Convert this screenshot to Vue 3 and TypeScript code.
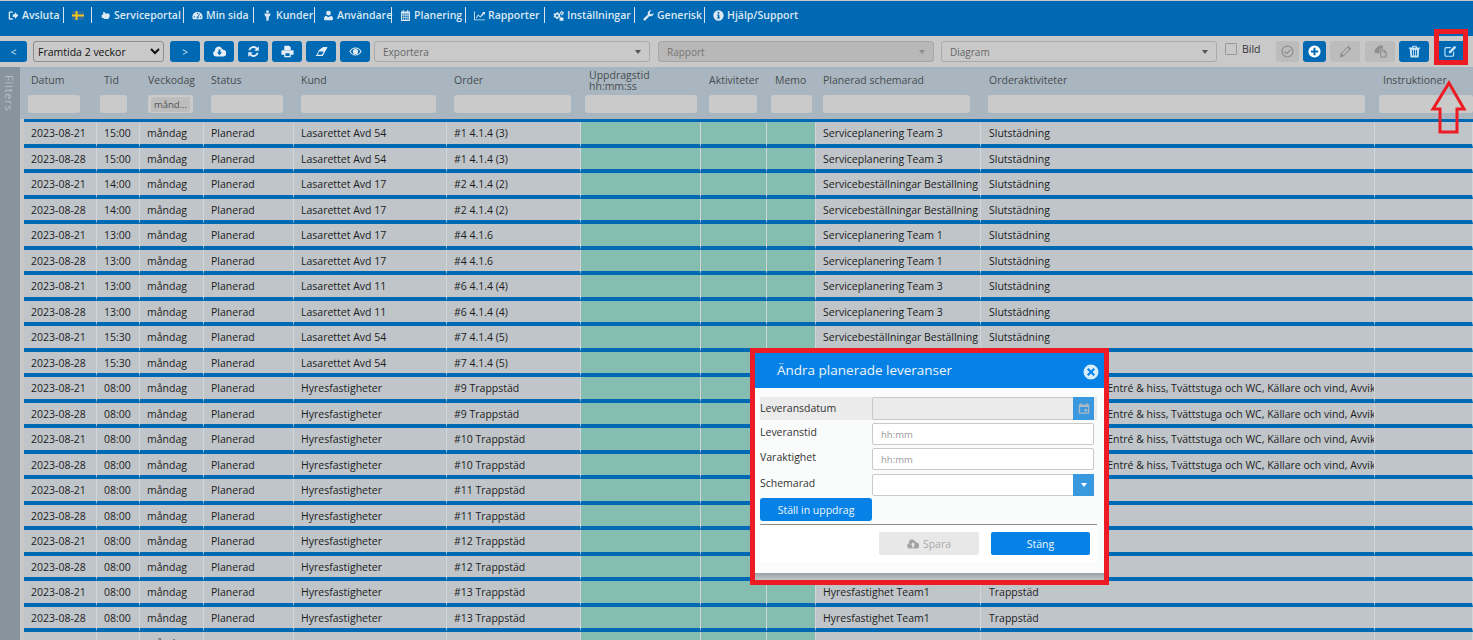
<script setup lang="ts">
interface Row {
  date: string
  time: string
  customer: string
  order: string
  plan: string
  activity: string
}

const icons: Record<string, string> = {
  signout: 'M1 3.5C1 2.7 1.7 2 2.5 2H7v2H3v8h4v2H2.5C1.7 14 1 13.300 1 12.500zM7 6h3V3l5 5-5 5v-3H7z',
  hand: 'M2 8.500 5 5.500 4 3.500 6 2.500 8 5H12.500C13.500 5 14 6 13.500 6.800 14.500 7.200 14.500 8.500 13.700 9 14.200 9.800 13.800 10.800 13 11 13.200 12.200 12.500 13 11.500 13H6.500L4.500 11.500H3z',
  dashboard: 'M8 2.500A7.500 7.500 0 0 0 .5 10c0 1.200.3 2.300.9 3.500h13.200c.6-1.200.9-2.300.9-3.500A7.500 7.500 0 0 0 8 2.500zM8 4a1 1 0 1 1 0 2 1 1 0 0 1 0-2zM3.500 9a1 1 0 1 1 0 2 1 1 0 0 1 0-2zM12.500 9a1 1 0 1 1 0 2 1 1 0 0 1 0-2zM10.600 5.200 11.500 5.700 9.300 9.800a1.500 1.500 0 1 1-1-.5z',
  male: 'M8 .5a2 2 0 1 1 0 4 2 2 0 0 1 0-4zM3.500 5h9L11.500 9H10L9.500 15.500H6.500L6 9H4.500z',
  user: 'M8 1a3.500 3.500 0 1 1 0 7 3.500 3.500 0 0 1 0-7zM4 8.500C5 9.500 6.500 10 8 10s3-.5 4-1.500c1.700.5 2.500 2.500 2.500 4.500 0 1-.7 2-2 2h-9c-1.300 0-2-1-2-2 0-2 .8-4 2.500-4.500z',
  calendar: 'M4 0h1.500v2h5V0H12v2h2.500v14h-13V2H4zM3 5v2h2V5zm3 0v2h2V5zm3 0v2h2V5zm3 0v2h1V5zM3 8v2h2V8zm3 0v2h2V8zm3 0v2h2V8zm3 0v2h1V8zM3 11v3h2v-3zm3 0v3h2v-3zm3 0v3h2v-3zm3 0v3h1v-3z',
  chart: 'M0 2h1.300v11.700H16V15H0zM2.500 11.500 6 6.500l3 2.500 4-5-1.300-1.200H16v4.200l-1.200-1.300L9.200 11 6.200 8.500 3.500 12.500z',
  cogs: 'M5.500 3.500 7 3l.6 1.500 1.400.8 1.400-.5.8 1.400-1 1.100v1.400l1 1.100-.8 1.400-1.400-.5-1.400.8L7 13H5l-.6-1.500L3 10.700l-1.400.5-.8-1.400 1-1.100V7.300l-1-1.100.8-1.400 1.400.5 1.400-.8zM6 6.500a1.700 1.700 0 1 0 0 3.400 1.700 1.700 0 0 0 0-3.400zM12.500 1l1 .3v1l.9.6.9-.4.5.9-.7.7v1l.7.7-.5.9-.9-.4-.9.6v1h-1.200l-.2-1-.9-.6-.8.4-.6-.9.7-.7v-1l-.7-.7.6-.9.8.4.9-.6.2-1zM12.500 3.500a1 1 0 1 0 0 2 1 1 0 0 0 0-2zM12.500 10l1 .3v.9l.9.6.9-.4.5.9-.7.7v1l.7.7-.5.800-.9-.4-.9.6v.3h-2l-.1-.3-.9-.6-.8.4-.6-.8.7-.7v-1l-.7-.7.6-.9.8.4.9-.6.2-.9z',
  wrench: 'M15.500 4.500a4.500 4.500 0 0 1-6 4.300L3.500 15a1.800 1.800 0 0 1-2.500-2.500l6.200-6A4.500 4.500 0 0 1 12.500.5L9.700 3.300l.6 2.400 2.400.6z',
  info: 'M8 .5a7.500 7.500 0 1 1 0 15 7.500 7.500 0 0 1 0-15zM6.800 3v2.300h2.400V3zM5.800 6.500v1.500h1v3h-1v1.500h4.400V11h-1V6.500z',
  clouddown: 'M12.800 6.300A3.500 3.500 0 0 1 12.500 14H3.500a3.500 3.500 0 0 1-1-6.800A4.500 4.500 0 0 1 11 4.500a3 3 0 0 1 1.800 1.800zM6.800 5.500V9H5l3 3.500L11 9H9.200V5.500z',
  cloudup: 'M12.800 6.300A3.500 3.500 0 0 1 12.500 14H3.500a3.500 3.500 0 0 1-1-6.800A4.500 4.500 0 0 1 11 4.500a3 3 0 0 1 1.800 1.800zM8 5.500 5 9h1.800v3.500h2.400V9H11z',
  refresh: 'M14.500 1.500V7h-5.500l2-2A4.200 4.200 0 0 0 4 6.500H1.700A6.500 6.500 0 0 1 12.700 3.300zM1.500 14.500V9H7L5 11a4.200 4.200 0 0 0 7-1.500h2.300a6.500 6.500 0 0 1-11 3.200z',
  print: 'M4 1h6l2 2v3H4zM1.500 6.500h13c.6 0 1 .4 1 1V12H12v3H4v-3H.5V7.500c0-.6.4-1 1-1zM5.500 10v3.500h5V10z',
  eraser: 'M10 2.500h5.500L9.500 13.500H1L5 6zM3 12h5.500l2.200-4H5.200z',
  eye: 'M8 3c3.500 0 6.200 2.300 7.500 5-1.300 2.700-4 5-7.500 5S1.800 10.700.5 8C1.800 5.300 4.500 3 8 3zM8 4.300c-2.700 0-5 1.600-6 3.700 1 2.100 3.300 3.700 6 3.700s5-1.600 6-3.700c-1-2.100-3.300-3.700-6-3.700zM8 4.800a3.200 3.200 0 1 1 0 6.400 3.200 3.200 0 0 1 0-6.400z',
  check: 'M8 .5a7.500 7.500 0 1 1 0 15 7.500 7.500 0 0 1 0-15zM8 2a6 6 0 1 0 0 12A6 6 0 0 0 8 2zM11.300 5.200l1.100 1.100L7 11.700 3.800 8.500l1.100-1.100L7 9.500z',
  plus: 'M8 .5a7.500 7.500 0 1 1 0 15 7.500 7.500 0 0 1 0-15zM6.800 3.500v3.300H3.500v2.400h3.300v3.300h2.400V9.200h3.300V6.800H9.200V3.500z',
  pencil: 'M11.500 1 15 4.500 5.500 14 1 15l1-4.500zM10.500 3.500 3.500 10.500 5.500 12.500 12.500 5.500z',
  copy: 'M6 .5h5v4H6.800v5.500H1V5.500zM7.500 5.500h5l3 3V15.500H7.500zM9 7v7h5V9.500h-2.500V7z',
  trash: 'M5.500 1h5l.8 2H15v1.500h-1.200l-.8 11H3l-.8-11H1V3h3.700zM6.300 2.300 6 3h4l-.3-.7zM5 6v7h1.300V6zm2.400 0v7h1.200V6zm2.300 0v7H11V6z',
  edit: 'M2.500 2.500H9l-1.400 1.400H2.800c-.5 0-.9.400-.9.900v7.400c0 .5.400.9.900.9h7.400c.5 0 .9-.4.900-.9V8.800l1.400-1.400v5.100c0 1-.9 1.900-1.900 1.900H2.500c-1 0-2-.9-2-1.900V4.500c0-1 1-2 2-2zM13 .8 15.200 3l-7 7H6v-2.200z',
  caldate: 'M3 1h2v1.500h6V1h2v1.500h2V15H1V2.500h2zM2.800 6v7.300h10.400V6zM8.500 8.500h3.500V12H8.500z',
  close: 'M8 .5a7.500 7.500 0 1 1 0 15 7.500 7.500 0 0 1 0-15zM5.500 4 4 5.500 6.500 8 4 10.500 5.500 12 8 9.500l2.500 2.500 1.500-1.500L9.500 8 12 5.500 10.500 4 8 6.500z',
}

const navItems = [
  { icon: 'signout', label: 'Avsluta', width: 64 },
  { flag: true, label: '', width: 28 },
  { icon: 'hand', label: 'Serviceportal', width: 92 },
  { icon: 'dashboard', label: 'Min sida', width: 70 },
  { icon: 'male', label: 'Kunder', width: 61 },
  { icon: 'user', label: 'Användare', width: 77 },
  { icon: 'calendar', label: 'Planering', width: 74 },
  { icon: 'chart', label: 'Rapporter', width: 79 },
  { icon: 'cogs', label: 'Inställningar', width: 90 },
  { icon: 'wrench', label: 'Generisk', width: 70 },
  { icon: 'info', label: 'Hjälp/Support', width: 90 },
]

const columns = [
  { title: 'Datum', left: 4, width: 52, pad: 7 },
  { title: 'Tid', left: 3, width: 27, pad: 7 },
  { title: 'Veckodag', left: 8, width: 45, pad: 8 },
  { title: 'Status', left: 7, width: 72, pad: 7 },
  { title: 'Kund', left: 7, width: 135, pad: 7 },
  { title: 'Order', left: 7, width: 117, pad: 7 },
  { title: 'Uppdragstid hh:mm:ss', left: 4, width: 112, pad: 8 },
  { title: 'Aktiviteter', left: 8, width: 48, pad: 8 },
  { title: 'Memo', left: 4, width: 41, pad: 8 },
  { title: 'Planerad schemarad', left: 7, width: 147, pad: 7 },
  { title: 'Orderaktiviteter', left: 7, width: 377, pad: 8 },
  { title: 'Instruktioner', left: 4, width: 94, pad: 8 },
]

const longActivity = 'Trappstädning, Sophus, Entré & hiss, Tvättstuga och WC, Källare och vind, Avvikelse'

function pair(time: string, customer: string, order: string, plan: string, activity: string): Row[] {
  return ['2023-08-21', '2023-08-28'].map((date) => ({ date, time, customer, order, plan, activity }))
}

const rows: Row[] = [
  ...pair('15:00', 'Lasarettet Avd 54', '#1 4.1.4 (3)', 'Serviceplanering Team 3', 'Slutstädning'),
  ...pair('14:00', 'Lasarettet Avd 17', '#2 4.1.4 (2)', 'Servicebeställningar Beställning', 'Slutstädning'),
  ...pair('13:00', 'Lasarettet Avd 17', '#4 4.1.6', 'Serviceplanering Team 1', 'Slutstädning'),
  ...pair('13:00', 'Lasarettet Avd 11', '#6 4.1.4 (4)', 'Serviceplanering Team 3', 'Slutstädning'),
  ...pair('15:30', 'Lasarettet Avd 54', '#7 4.1.4 (5)', 'Servicebeställningar Beställning', 'Slutstädning'),
  ...pair('08:00', 'Hyresfastigheter', '#9 Trappstäd', 'Hyresfastighet Team1', longActivity),
  ...pair('08:00', 'Hyresfastigheter', '#10 Trappstäd', 'Hyresfastighet Team1', longActivity),
  ...pair('08:00', 'Hyresfastigheter', '#11 Trappstäd', 'Hyresfastighet Team1', 'Trappstäd'),
  ...pair('08:00', 'Hyresfastigheter', '#12 Trappstäd', 'Hyresfastighet Team1', 'Trappstäd'),
  ...pair('08:00', 'Hyresfastigheter', '#13 Trappstäd', 'Hyresfastighet Team1', 'Trappstäd'),
]
</script>

<template>
  <div class="page">
    <nav class="nav">
      <div
        v-for="item in navItems"
        :key="item.label || 'flag'"
        class="nav-item"
        :style="{ width: `${item.width}px` }"
      >
        <svg v-if="item.flag" class="flag" viewBox="0 0 12 9">
          <rect width="12" height="9" fill="#2a6ca8" />
          <rect x="3.500" width="2" height="9" fill="#f2c318" />
          <rect y="3.500" width="12" height="2" fill="#f2c318" />
        </svg>
        <template v-else>
          <svg class="nav-icon" viewBox="0 0 16 16"><path :d="icons[item.icon!]" fill-rule="evenodd" /></svg>
          <span>{{ item.label }}</span>
        </template>
      </div>
    </nav>

    <div class="toolbar">
      <button class="btn btn-back">&lt;</button>
      <select class="period">
        <option>Framtida 2 veckor</option>
      </select>
      <button class="btn">&gt;</button>
      <button class="btn"><svg viewBox="0 0 16 16"><path :d="icons.clouddown" fill-rule="evenodd" /></svg></button>
      <button class="btn"><svg viewBox="0 0 16 16"><path :d="icons.refresh" fill-rule="evenodd" /></svg></button>
      <button class="btn"><svg viewBox="0 0 16 16"><path :d="icons.print" fill-rule="evenodd" /></svg></button>
      <button class="btn"><svg viewBox="0 0 16 16"><path :d="icons.eraser" fill-rule="evenodd" /></svg></button>
      <button class="btn"><svg viewBox="0 0 16 16"><path :d="icons.eye" fill-rule="evenodd" /></svg></button>
      <div class="combo combo-export">Exportera<i class="caret"></i></div>
      <div class="combo combo-report">Rapport<i class="caret"></i></div>
      <div class="combo combo-chart">Diagram<i class="caret"></i></div>
      <label class="pic-check"><span class="box"></span>Bild</label>
      <button class="btn btn-off btn-small"><svg viewBox="0 0 16 16"><path :d="icons.check" fill-rule="evenodd" /></svg></button>
      <button class="btn btn-small btn-plus"><svg viewBox="0 0 16 16"><path :d="icons.plus" fill-rule="evenodd" /></svg></button>
      <button class="btn btn-off"><svg viewBox="0 0 16 16"><path :d="icons.pencil" fill-rule="evenodd" /></svg></button>
      <button class="btn btn-off btn-copy"><svg viewBox="0 0 16 16"><path :d="icons.copy" fill-rule="evenodd" /></svg></button>
      <button class="btn btn-light"><svg viewBox="0 0 16 16"><path :d="icons.trash" fill-rule="evenodd" /></svg></button>
      <button class="btn btn-light btn-edit"><svg viewBox="0 0 16 16"><path :d="icons.edit" fill-rule="evenodd" /></svg></button>
    </div>

    <div class="main">
      <aside class="filters-strip"><span>Filters</span></aside>
      <div class="grid-wrap">
        <div class="grid-head cols">
          <div v-for="(col, i) in columns" :key="col.title" class="head-cell">
            <div class="head-title" :style="{ paddingLeft: `${col.pad}px` }">{{ col.title }}</div>
            <div class="head-filter" :style="{ marginLeft: `${col.left}px`, width: `${col.width}px` }">
              <span v-if="i === 2" class="chip">månd...</span>
            </div>
          </div>
        </div>
        <div class="grid-body">
          <div v-for="(row, i) in rows" :key="i" class="grid-row cols">
            <div class="cell">{{ row.date }}</div>
            <div class="cell">{{ row.time }}</div>
            <div class="cell">måndag</div>
            <div class="cell">Planerad</div>
            <div class="cell">{{ row.customer }}</div>
            <div class="cell">{{ row.order }}</div>
            <div class="cell cell-green"></div>
            <div class="cell cell-green"></div>
            <div class="cell cell-green"></div>
            <div class="cell">{{ row.plan }}</div>
            <div class="cell cell-wide">{{ row.activity }}</div>
            <div class="cell"></div>
          </div>
          <div class="grid-row cols">
            <div class="cell"></div>
            <div class="cell"></div>
            <div class="cell">måndag</div>
            <div class="cell"></div>
            <div class="cell"></div>
            <div class="cell"></div>
            <div class="cell cell-green"></div>
            <div class="cell cell-green"></div>
            <div class="cell cell-green"></div>
            <div class="cell"></div>
            <div class="cell cell-wide"></div>
            <div class="cell"></div>
          </div>
        </div>
      </div>
    </div>

    <section class="modal">
      <header class="modal-head">
        <h2>Ändra planerade leveranser</h2>
        <svg class="modal-close" viewBox="0 0 16 16"><path :d="icons.close" fill-rule="evenodd" /></svg>
      </header>
      <div class="modal-body">
        <div class="form-row form-row-date">
          <label>Leveransdatum</label>
          <div class="field field-off">
            <span class="addon"><svg viewBox="0 0 16 16"><path :d="icons.caldate" fill-rule="evenodd" /></svg></span>
          </div>
        </div>
        <div class="form-row">
          <label>Leveranstid</label>
          <div class="field"><span class="hint">hh:mm</span></div>
        </div>
        <div class="form-row">
          <label>Varaktighet</label>
          <div class="field"><span class="hint">hh:mm</span></div>
        </div>
        <div class="form-row">
          <label>Schemarad</label>
          <div class="field"><span class="addon"><i class="caret caret-white"></i></span></div>
        </div>
        <button class="assign">Ställ in uppdrag</button>
        <div class="modal-foot">
          <button class="save"><svg viewBox="0 0 16 16"><path :d="icons.cloudup" fill-rule="evenodd" /></svg>Spara</button>
          <button class="close-btn">Stäng</button>
        </div>
      </div>
      <div class="modal-shadow"></div>
    </section>

    <div class="mark mark-modal"></div>
    <div class="mark mark-edit"></div>
    <svg class="mark-arrow" viewBox="0 0 38 56">
      <polygon points="19,3 34,29 27,29 27,52 10,52 10,29 3,29" fill="none" stroke="#ed1c24" stroke-width="3" />
    </svg>
  </div>
</template>

<style scoped>
.page {
  position: relative;
  width: 1473px;
  height: 640px;
  overflow: hidden;
  background: #c9c9c9;
  font-family: "Open Sans", "Noto Sans", sans-serif;
  font-size: 10.5px;
  color: #1c1c1c;
}

.nav {
  display: flex;
  height: 35px;
  margin-top: 1px;
  padding-top: 6px;
  box-sizing: border-box;
  background: #0069b4;
  align-items: flex-start;
}

.page {
  padding-top: 1px;
  box-sizing: border-box;
  background: #c9c9c9;
}

.nav {
  margin-top: 0;
}

.nav-item {
  display: flex;
  flex: none;
  align-items: center;
  gap: 3px;
  height: 16px;
  padding-left: 8px;
  box-sizing: border-box;
  border-right: 1px solid #d5e3ee;
  color: #dce8f2;
  font-size: 10.5px;
  font-weight: 600;
  white-space: nowrap;
}

.nav-item:last-child {
  border-right: none;
}

.nav-icon {
  flex: none;
  width: 11px;
  height: 11px;
  fill: #dce8f2;
}

.flag {
  width: 12px;
  height: 9px;
}

.toolbar {
  display: flex;
  align-items: center;
  height: 31px;
  background: #c9c9c9;
}

.btn {
  display: flex;
  flex: none;
  align-items: center;
  justify-content: center;
  width: 30px;
  height: 21px;
  margin-left: 4px;
  padding: 0;
  border: none;
  border-radius: 3px;
  background: #0069b4;
  color: #dce8f2;
  font-family: inherit;
  font-size: 10px;
}

.btn svg {
  width: 13px;
  height: 13px;
  fill: #e6eff6;
}

.btn-back {
  margin-left: 0;
  width: 27px;
  border-radius: 0 3px 3px 0;
}

.period {
  flex: none;
  width: 131px;
  height: 21px;
  margin: 0 2px 0 6px;
  border: 1px solid #8e8e8e;
  border-radius: 3px;
  background: #c9c9c9;
  color: #111;
  font-family: inherit;
  font-size: 10.5px;
}

.combo {
  display: flex;
  flex: none;
  align-items: center;
  justify-content: space-between;
  height: 21px;
  padding: 0 8px;
  box-sizing: border-box;
  border: 1px solid #aaa;
  border-radius: 3px;
  color: #666;
  font-size: 10px;
}

.combo-export {
  width: 276px;
  margin-left: 4px;
}

.combo-report {
  width: 276px;
  margin-left: 8px;
  background: #b8b8b8;
  border-color: #a6a6a6;
  color: #777;
}

.combo-chart {
  width: 276px;
  margin-left: 7px;
}

.caret {
  width: 0;
  height: 0;
  border-left: 3.5px solid transparent;
  border-right: 3.5px solid transparent;
  border-top: 4px solid #555;
}

.combo-report .caret {
  border-top-color: #8d8d8d;
}

.caret-white {
  border-top-color: #fff;
}

.pic-check {
  display: flex;
  flex: none;
  align-items: center;
  gap: 5px;
  width: 47px;
  margin-left: 8px;
  margin-top: -5px;
  color: #333;
}

.box {
  flex: none;
  width: 10px;
  height: 10px;
  border: 1px solid #999;
  border-radius: 1px;
}

.btn-small {
  width: 23px;
}

.btn-off {
  background: #bcbcbc;
}

.btn-off svg {
  fill: #8e8e8e;
}

.btn-plus svg {
  fill: #fff;
}

.btn-copy {
  margin-left: 5px;
}

.btn-light svg {
  fill: #c4e2f5;
}

.btn-edit {
  margin-left: 6px;
}

.main {
  display: flex;
  height: 573px;
}

.filters-strip {
  flex: none;
  width: 20px;
  margin-right: 4px;
  background: #87949d;
  color: #b8c0c6;
}

.filters-strip span {
  display: block;
  margin: 8px 0 0 2px;
  writing-mode: vertical-rl;
  font-size: 11px;
  letter-spacing: 0.8px;
  line-height: 14px;
}

.grid-wrap {
  flex: 1;
  min-width: 0;
  margin-left: -4px;
}

.cols {
  display: grid;
  grid-template-columns: 73px 43px 64px 90px 153px 134px 120px 66px 49px 165px 394px 98px;
}

.grid-head {
  height: 52px;
  padding-left: 4px;
  background: #a9b6bf;
}

.head-title {
  display: flex;
  align-items: center;
  height: 27px;
  padding-right: 18px;
  color: #474c50;
  font-size: 10.5px;
  font-weight: 500;
  line-height: 11px;
}

.head-filter {
  display: flex;
  align-items: center;
  justify-content: center;
  height: 18px;
  margin-top: 1px;
  border-radius: 3px;
  background: #cacaca;
}

.chip {
  padding: 1px 3px;
  border-radius: 2px;
  background: #bdbdbd;
  color: #555;
  font-size: 9.5px;
  line-height: 13px;
}

.grid-body {
  display: grid;
  grid-auto-rows: 25.5px;
  margin-left: 4px;
  border-top: 3px solid #0069b4;
}

.cell {
  min-width: 0;
  padding: 0 0 0 7px;
  box-sizing: border-box;
  border-right: 1px solid #d2d4d6;
  border-bottom: 4px solid #0069b4;
  background: #c0c5c9;
  white-space: nowrap;
  overflow: hidden;
  line-height: 22px;
}

.cell-green {
  background: #85bdb1;
}

.cell-wide {
  padding-left: 8px;
}

.modal {
  position: absolute;
  left: 755px;
  top: 353px;
  width: 349px;
  height: 227px;
  background: #fafbfb;
  display: flex;
  flex-direction: column;
}

.modal-head {
  position: relative;
  display: flex;
  flex: none;
  align-items: center;
  height: 35px;
  padding-left: 22px;
  padding-bottom: 1px;
  box-sizing: border-box;
  background: #0682e6;
}

.modal-head h2 {
  margin: 0;
  color: #eef6fd;
  font-size: 13.5px;
  font-weight: 400;
}

.modal-close {
  position: absolute;
  left: 328px;
  top: 11px;
  width: 16px;
  height: 16px;
  fill: #d6ebfb;
}

.modal-body {
  flex: 1;
  padding: 9px 7px 0 5px;
}

.form-row {
  display: flex;
  height: 25.4px;
  color: #333;
}

.form-row label {
  flex: none;
  width: 112px;
  padding-top: 2px;
  line-height: 14px;
}

.form-row-date {
  height: 23px;
  margin-bottom: 3px;
  background: #ebebeb;
}

.form-row-date label {
  padding-top: 4px;
}

.field {
  position: relative;
  width: 222px;
  height: 22px;
  box-sizing: border-box;
  border: 1px solid #c9c9c9;
  border-radius: 2px;
  background: #fff;
}

.field-off {
  height: 23px;
  background: #ebebeb;
}

.hint {
  display: block;
  padding: 3px 0 0 8px;
  color: #999;
  font-size: 9.5px;
  line-height: 16px;
}

.addon {
  position: absolute;
  right: -1px;
  top: -1px;
  bottom: -1px;
  display: flex;
  align-items: center;
  justify-content: center;
  width: 21px;
  background: #3a98df;
}

.addon svg {
  width: 12px;
  height: 13px;
  fill: #a9b9c4;
}

.assign {
  display: block;
  width: 112px;
  height: 23px;
  margin-top: -1px;
  padding: 0;
  border: none;
  border-radius: 3px;
  background: #0682e6;
  color: #eef6fd;
  font-family: inherit;
  font-size: 10.5px;
}

.modal-foot {
  display: flex;
  height: 38px;
  margin-top: 3px;
  padding: 7px 7px 0 119px;
  gap: 12px;
  box-sizing: border-box;
  border-top: 1px solid #8b8b8b;
  background: #fff;
}

.save,
.close-btn {
  display: flex;
  flex: none;
  align-items: center;
  justify-content: center;
  gap: 4px;
  height: 23px;
  padding: 0;
  border: none;
  border-radius: 2px;
  font-family: inherit;
  font-size: 10.5px;
}

.save {
  width: 100px;
  background: #e8e8e8;
  color: #a9a9a9;
}

.save svg {
  width: 12px;
  height: 12px;
  fill: #a3a3a3;
}

.close-btn {
  width: 99px;
  background: #0682e6;
  color: #eef6fd;
}

.modal-shadow {
  flex: none;
  height: 7px;
  background: linear-gradient(#9aa1a6, #c0c5c9);
}

.mark {
  position: absolute;
  box-sizing: border-box;
  border: 5px solid #ed1c24;
  pointer-events: none;
}

.mark-modal {
  left: 750px;
  top: 348px;
  width: 359px;
  height: 237px;
}

.mark-edit {
  left: 1434px;
  top: 29px;
  width: 34px;
  height: 36px;
}

.mark-arrow {
  position: absolute;
  left: 1430px;
  top: 80px;
  width: 38px;
  height: 56px;
}
</style>

<style>
html,
body {
  margin: 0;
  overflow: hidden;
}
</style>
